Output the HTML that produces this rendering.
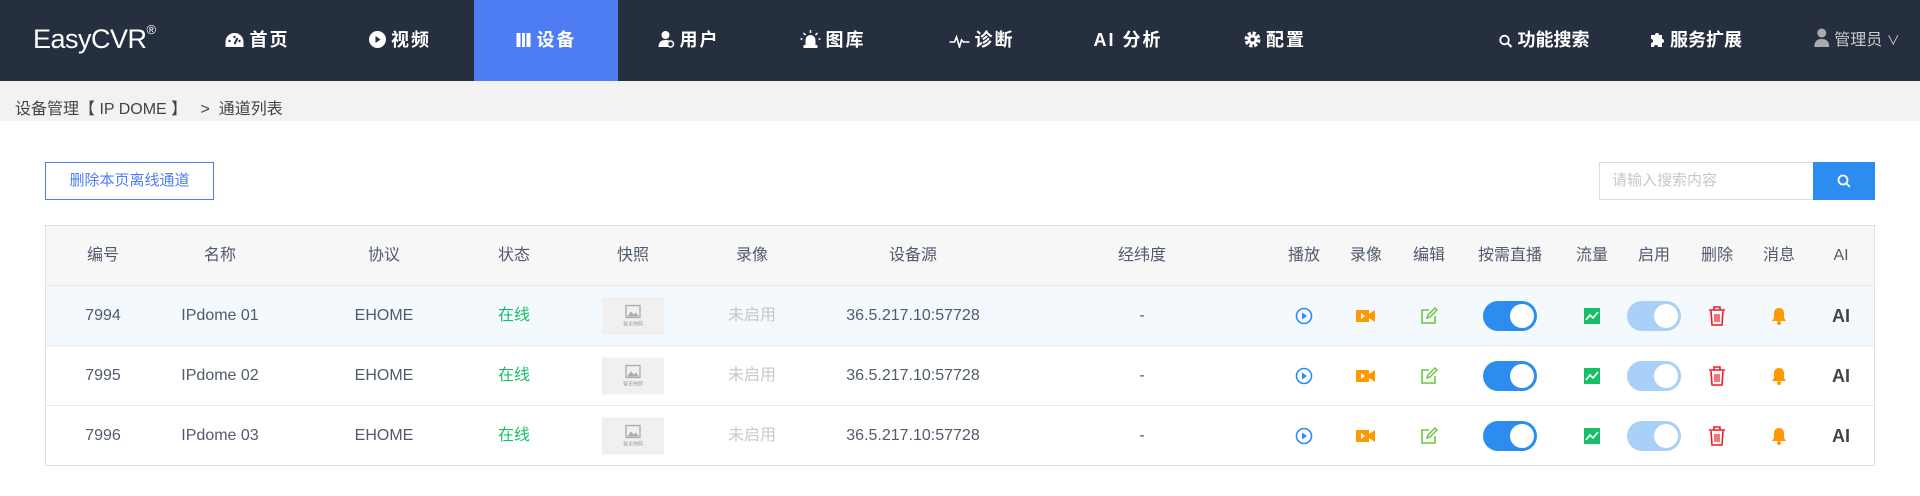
<!DOCTYPE html>
<html><head><meta charset="utf-8"><style>
*{margin:0;padding:0;box-sizing:border-box}
body{width:1920px;height:496px;background:#fff;font-family:"Liberation Sans","Noto Sans CJK SC",sans-serif;position:relative;overflow:hidden;color:#515a6e}
.nav{position:absolute;left:0;top:0;width:1920px;height:81px;background:#262f3f}
.logo{position:absolute;left:33px;top:24px;color:#fff;font-size:27px;letter-spacing:-0.5px}
.logo sup{font-size:13px;position:relative;top:-4px}
.ni{position:absolute;top:0;height:81px;line-height:81px;color:#fff;font-weight:bold;font-size:18px;white-space:nowrap;transform:translateX(-50%);letter-spacing:2px}
.act{position:absolute;left:474px;top:0;width:144px;height:81px;background:#4e7cf3}
.ic{display:inline-block;vertical-align:-2px;margin-right:5px}
.bc{position:absolute;left:0;top:81px;width:1920px;height:40px;background:#f2f2f2}
.bc span{position:absolute;left:15px;top:19px;font-size:16px;line-height:20px;color:#444}
.btn{position:absolute;left:45px;top:162px;width:169px;height:38px;border:1px solid #4e7cf3;color:#4e7cf3;font-size:15px;text-align:center;line-height:36px}
.srch{position:absolute;left:1599px;top:162px;width:215px;height:38px;border:1px solid #dcdee2;border-right:none;color:#c5c8ce;font-size:15px;line-height:36px;padding-left:12px}
.sbtn{position:absolute;left:1813px;top:162px;width:62px;height:38px;background:#2d8cf0}
.tbl{position:absolute;left:45px;top:225px;width:1830px;height:241px;border:1px solid #e0e0e0}
.hd{position:absolute;left:0;top:0;width:100%;height:60px;background:#f7f7f7;border-bottom:1px solid #e8eaec}
.row{position:absolute;left:0;width:100%;height:60px;border-bottom:1px solid #e8eaec}
.c{position:absolute;top:50%;transform:translate(-50%,-50%);font-size:16px;line-height:20px;white-space:nowrap;color:#515a6e;display:flex;align-items:center;justify-content:center}
.thumb{width:62px;height:37px;background:#f0f0f0;display:flex;flex-direction:column;align-items:center;justify-content:center}
.tg{width:54px;height:30px;border-radius:15px;background:#2d8cf0;position:relative}
.tg::after{content:"";position:absolute;right:3px;top:3px;width:24px;height:24px;border-radius:50%;background:#fff}
.tg.l{background:#a9d0f7}
</style></head><body>
<div class="nav">
<div class="logo">EasyCVR<sup>®</sup></div>
<div class="act"></div>
<div class="ni" style="left:257px"><svg class="ic" width="20" height="16" viewBox="0 0 20 16"><path d="M10 1A9 9 0 0 0 1 10v5h18v-5A9 9 0 0 0 10 1z" fill="#fff"/><path d="M10 12l3-6" stroke="#262f3f" stroke-width="2"/><circle cx="5" cy="9" r="1.2" fill="#262f3f"/><circle cx="15" cy="9" r="1.2" fill="#262f3f"/><circle cx="10" cy="5" r="1.2" fill="#262f3f"/></svg>首页</div>
<div class="ni" style="left:400px"><svg class="ic" width="17" height="17" viewBox="0 0 17 17"><circle cx="8.5" cy="8.5" r="8.5" fill="#fff"/><path d="M6.5 5l5 3.5-5 3.5z" fill="#262f3f"/></svg>视频</div>
<div class="ni" style="left:546px"><svg class="ic" width="16" height="16" viewBox="0 0 16 16"><rect x="1" y="1" width="4" height="14" fill="#fff"/><rect x="6.5" y="1" width="3" height="14" fill="#fff"/><rect x="11" y="1" width="4" height="14" fill="#fff"/></svg>设备</div>
<div class="ni" style="left:689px"><svg class="ic" width="16" height="18" viewBox="0 0 16 18"><circle cx="7" cy="5" r="4" fill="#fff"/><path d="M0 17c0-5 3-7 7-7s5 1 6 3v4z" fill="#fff"/><circle cx="12" cy="14" r="3" fill="#262f3f" stroke="#fff" stroke-width="1.5"/></svg>用户</div>
<div class="ni" style="left:833px"><svg class="ic" width="20" height="18" viewBox="0 0 20 18"><path d="M5 16V10a5 5 0 0 1 10 0v6z" fill="#fff"/><rect x="3" y="15" width="14" height="3" fill="#fff"/><path d="M10 0v3M3 3l2 2M17 3l-2 2M0 9h2M18 9h2" stroke="#fff" stroke-width="1.5"/></svg>图库</div>
<div class="ni" style="left:982px"><svg class="ic" width="20" height="14" viewBox="0 0 20 14"><path d="M0 8h5l2-5 3 10 2-7 2 2h6" stroke="#fff" stroke-width="1.6" fill="none"/></svg>诊断</div>
<div class="ni" style="left:1128px">AI 分析</div>
<div class="ni" style="left:1275px"><svg class="ic" width="17" height="17" viewBox="0 0 17 17"><circle cx="8.5" cy="8.5" r="6" fill="none" stroke="#fff" stroke-width="4" stroke-dasharray="3 1.7"/><circle cx="8.5" cy="8.5" r="5" fill="#fff"/><circle cx="8.5" cy="8.5" r="2" fill="#262f3f"/></svg>配置</div>
<div class="ni" style="left:1544px;letter-spacing:0"><svg class="ic" width="14" height="14" viewBox="0 0 14 14"><circle cx="6" cy="6" r="4.3" stroke="#fff" stroke-width="1.8" fill="none"/><path d="M9 9l4 4" stroke="#fff" stroke-width="2"/></svg>功能搜索</div>
<div class="ni" style="left:1695px;letter-spacing:0"><svg class="ic" width="17" height="17" viewBox="0 0 17 17"><path d="M3 4h4a2 2 0 1 1 4 0h3v4a2 2 0 1 1 0 4v4H10a2 2 0 1 0-4 0H3v-4a2 2 0 1 0 0-4z" fill="#fff"/></svg>服务扩展</div>
<div class="ni" style="left:1857px;font-weight:normal;font-size:16px;color:#ccc;letter-spacing:0"><svg class="ic" width="15" height="19" viewBox="0 0 15 19"><circle cx="7.5" cy="5" r="4.5" fill="#aaa"/><path d="M0 19c0-6 3-8 7.5-8s7.5 2 7.5 8z" fill="#aaa"/></svg>管理员 <span style="font-size:13px">∨</span></div>
</div>
<div class="bc"><span>设备管理【 IP DOME 】&nbsp;&nbsp;&nbsp;&gt;&nbsp;&nbsp;通道列表</span></div>
<div class="btn">删除本页离线通道</div>
<div class="srch">请输入搜索内容</div>
<div class="sbtn"><svg style="position:absolute;left:24px;top:12px" width="14" height="14" viewBox="0 0 14 14"><circle cx="6" cy="6" r="4.5" stroke="#fff" stroke-width="1.8" fill="none"/><path d="M9.3 9.3l3.5 3.5" stroke="#fff" stroke-width="2"/></svg></div>
<div class="tbl">
<div class="hd">
<span class="c" style="left:57px">编号</span><span class="c" style="left:174px">名称</span><span class="c" style="left:338px">协议</span><span class="c" style="left:468px">状态</span><span class="c" style="left:587px">快照</span><span class="c" style="left:706px">录像</span><span class="c" style="left:867px">设备源</span><span class="c" style="left:1096px">经纬度</span><span class="c" style="left:1258px">播放</span><span class="c" style="left:1320px">录像</span><span class="c" style="left:1383px">编辑</span><span class="c" style="left:1464px">按需直播</span><span class="c" style="left:1546px">流量</span><span class="c" style="left:1608px">启用</span><span class="c" style="left:1671px">删除</span><span class="c" style="left:1733px">消息</span><span class="c" style="left:1795px">AI</span>
</div>
<div class="row" style="top:60px;background:#f3f9fd"></div>
<div class="row" style="top:120px"></div>
<div class="row" style="top:180px;border-bottom:none"></div>
</div>
<script>
var rows=[["7994","IPdome 01"],["7995","IPdome 02"],["7996","IPdome 03"]];
var t=document.querySelector('.tbl'),h='';
rows.forEach(function(r,i){var y=60+i*60+30;
function c(x,html,st){h+='<span class="c" style="left:'+x+'px;top:'+y+'px;'+(st||'')+'">'+html+'</span>';}
c(57,r[0]);c(174,r[1]);c(338,'EHOME');c(468,'在线','color:#19be6b');
c(587,'<div class="thumb"><svg width="16" height="14" viewBox="0 0 16 14"><rect x="1" y="1" width="14" height="12" fill="none" stroke="#aaa" stroke-width="1.3"/><path d="M2 12l4-5 3 3 2-2 3 4z" fill="#aaa"/></svg><div style="font-size:5px;line-height:6px;color:#999;margin-top:3px">暂无快照</div></div>');
c(706,'未启用','color:#c5c8ce');c(867,'36.5.217.10:57728');c(1096,'-');
c(1258,'<svg width="18" height="18" viewBox="0 0 18 18"><circle cx="9" cy="9" r="7.5" fill="none" stroke="#2d8cf0" stroke-width="1.6"/><path d="M7 5.5l5 3.5-5 3.5z" fill="#2d8cf0"/></svg>');
c(1320,'<svg width="20" height="14" viewBox="0 0 20 14"><rect x="0" y="1" width="13" height="12" fill="#ff9900"/><path d="M13 5l6-4v12l-6-4z" fill="#ff9900"/><path d="M5 4l4 3-4 3z" fill="#fff"/></svg>');
c(1383,'<svg width="18" height="18" viewBox="0 0 18 18"><path d="M9 3H2v13h13V9" fill="none" stroke="#6cc644" stroke-width="1.6"/><path d="M7 11l1-3 7-7 2 2-7 7z" fill="none" stroke="#6cc644" stroke-width="1.5"/></svg>');
c(1464,'<div class="tg"></div>');
c(1546,'<svg width="16" height="16" viewBox="0 0 16 16"><rect width="16" height="16" fill="#19be6b"/><path d="M2 12l4-5 3 3 5-6" stroke="#fff" stroke-width="1.6" fill="none"/></svg>');
c(1608,'<div class="tg l"></div>');
c(1671,'<svg width="18" height="20" viewBox="0 0 18 20"><path d="M1 4h16M6 4V1h6v3" stroke="#ed1c24" stroke-width="1.6" fill="none"/><path d="M3 5l1 14h10l1-14" stroke="#ed1c24" stroke-width="1.6" fill="none"/><path d="M7 8v8M9 8v8M11 8v8" stroke="#ed1c24" stroke-width="1.2"/></svg>');
c(1733,'<svg width="16" height="18" viewBox="0 0 16 18"><path d="M8 1c-3 0-5 2-5 5v5l-2 3h14l-2-3V6c0-3-2-5-5-5z" fill="#ff9900"/><circle cx="8" cy="16" r="2" fill="#ff9900"/></svg>');
c(1795,'AI','font-weight:bold;font-size:18px;color:#444');
});
t.insertAdjacentHTML('beforeend',h);
</script>
</body></html>
